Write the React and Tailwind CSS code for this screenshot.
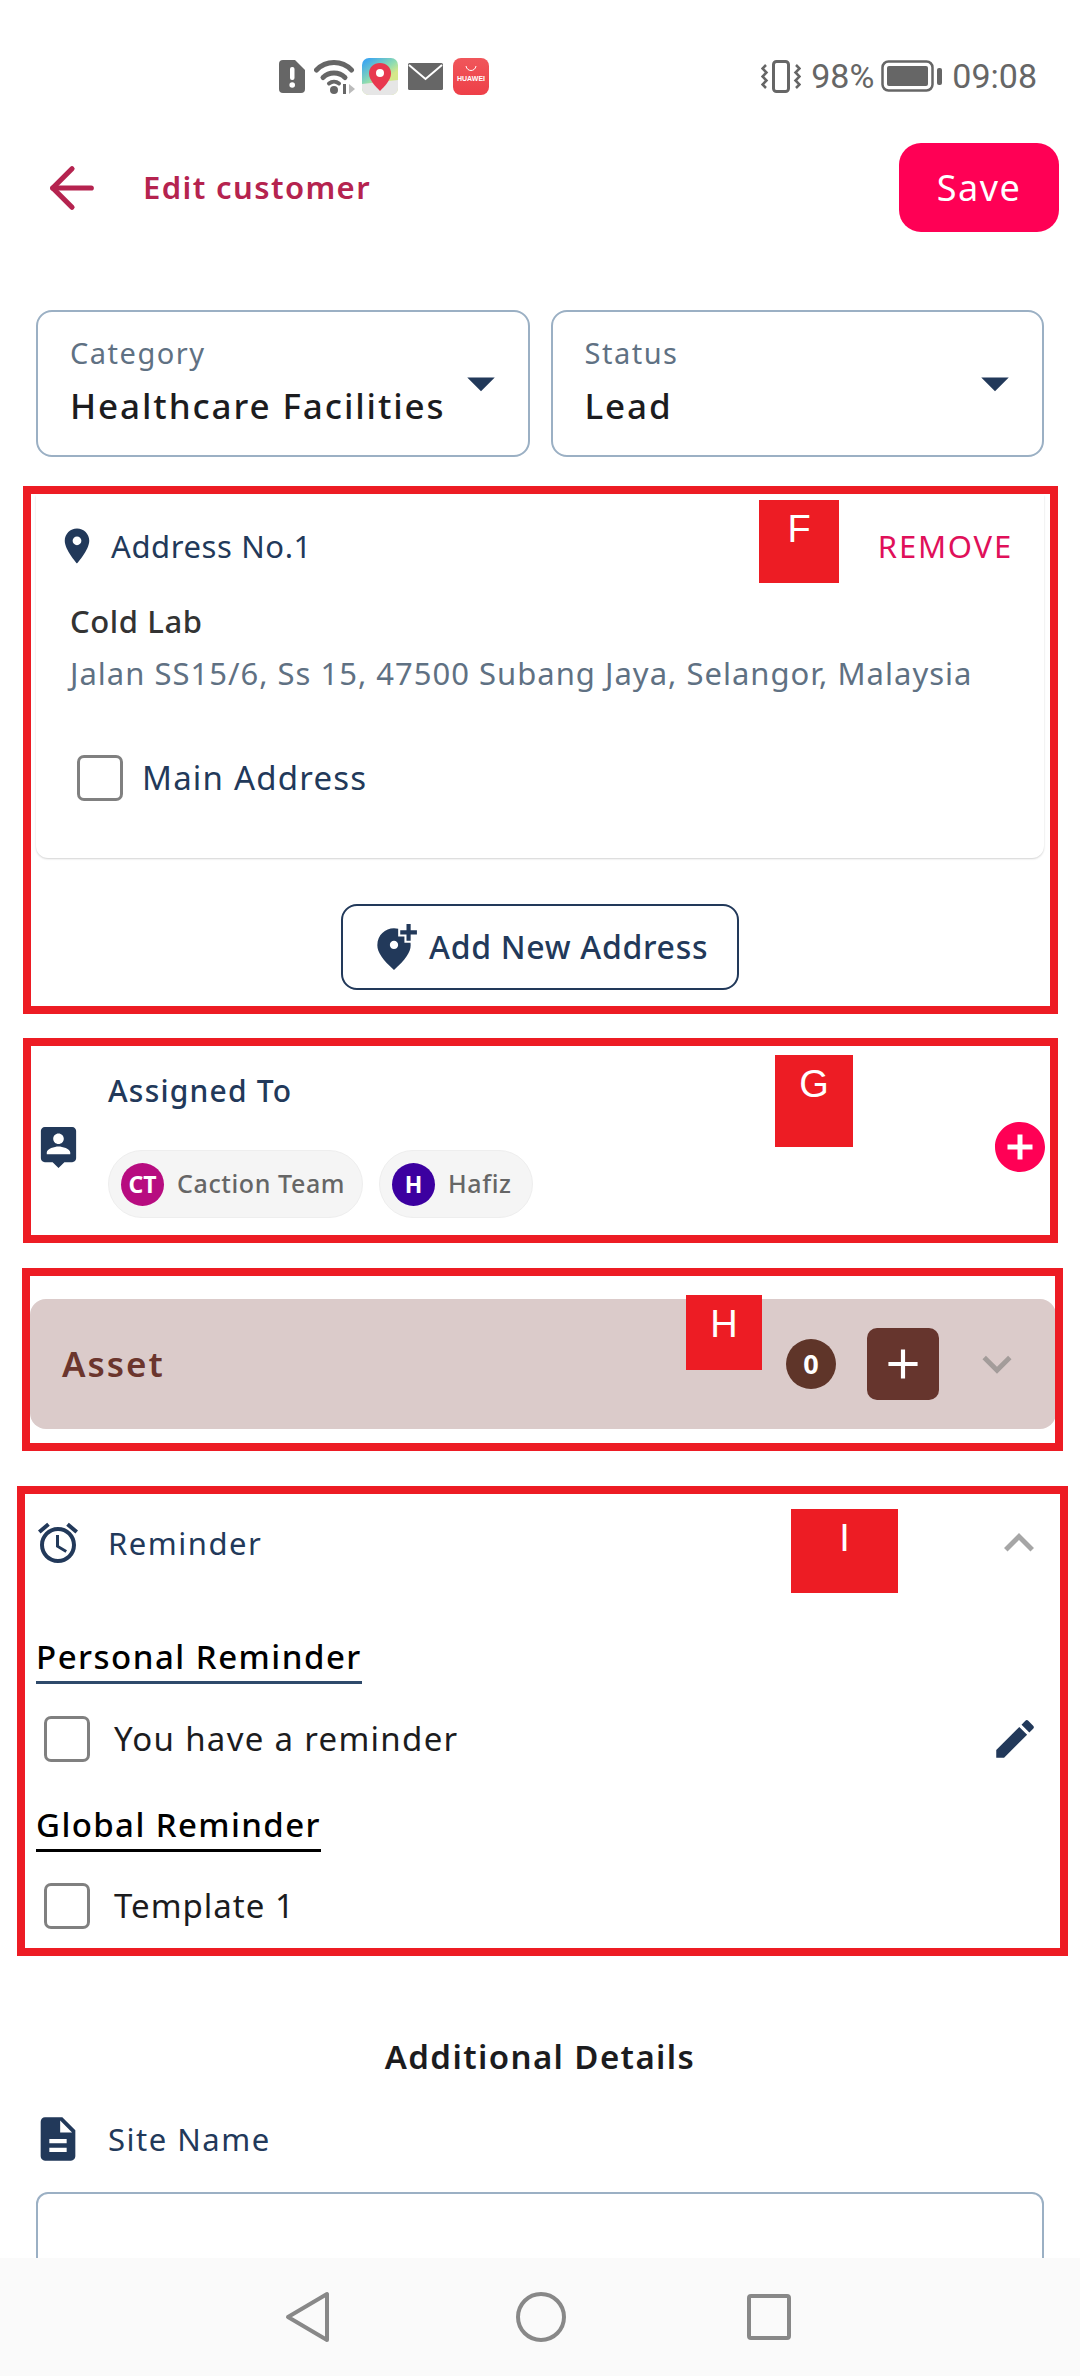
import React from "react";
import { ArrowLeft } from "lucide-react";
import { MdPlace, MdAddLocationAlt, MdAccessAlarm, MdEdit, MdDescription, MdArrowDropDown, MdAdd, MdKeyboardArrowDown, MdKeyboardArrowUp, MdAddCircle } from "react-icons/md";

function StatusBar() {
  return (
    <div className="flex h-[110px] shrink-0 items-start pt-[58px] text-[#666666]">
      <div className="ml-[279px] flex items-center">
        <svg width="26" height="33" viewBox="0 0 26 33"><path d="M4 0h12l10 10v19a4 4 0 0 1-4 4H4a4 4 0 0 1-4-4V4a4 4 0 0 1 4-4z" fill="#666"/><rect x="11" y="7" width="4.5" height="13" rx="2" fill="#fff"/><circle cx="13.2" cy="25" r="2.8" fill="#fff"/></svg>
        <svg className="ml-[9px]" width="42" height="36" viewBox="0 0 42 36" fill="none"><path d="M2.500 11C12 1 28 1 37.500 11" stroke="#666" strokeWidth="5" strokeLinecap="round"/><path d="M9 18.500c6-6 16-6 22 0" stroke="#666" strokeWidth="5" strokeLinecap="round"/><path d="M15 24.500c3-2.500 7-2.500 10 0" stroke="#666" strokeWidth="4" strokeLinecap="round"/><circle cx="20" cy="31" r="4" fill="#666"/><rect x="29" y="25" width="3" height="10" fill="#666"/><path d="M35 25l6 5-6 5z" fill="#bbb"/></svg>
        <svg className="ml-[6px]" width="36" height="37" viewBox="0 0 36 37"><defs><linearGradient id="mapg" x1="0" y1="0" x2="0.7" y2="1"><stop offset="0.1" stopColor="#3fa8ee"/><stop offset="0.5" stopColor="#8fdcb0"/><stop offset="0.7" stopColor="#d5e88a"/></linearGradient></defs><rect width="36" height="37" rx="7" fill="url(#mapg)"/><path d="M0 26l36-4v8a7 7 0 0 1-7 7H7a7 7 0 0 1-7-7z" fill="#e6e6e6"/><path d="M18 5c-6.500 0-11 4.500-11 10.500C7 22 14 29 18 33c4-4 11-11 11-17.500C29 9.500 24.500 5 18 5z" fill="#e8384f"/><circle cx="18" cy="15" r="4" fill="#fff"/></svg>
        <svg className="ml-[10px]" width="35" height="27" viewBox="0 0 35 27"><rect width="35" height="27" rx="1.500" fill="#666"/><path d="M1 2l16.500 14L34 2" fill="none" stroke="#fff" strokeWidth="2"/></svg>
        <div className="ml-[10px] flex h-[37px] w-[36px] flex-col items-center rounded-[8px] bg-gradient-to-b from-[#f0565b] to-[#ee3f48]">
          <svg className="mt-[7px]" width="12" height="7" viewBox="0 0 12 7" fill="none"><path d="M1 1c1 6 9 6 10 0" stroke="#fff" strokeWidth="1"/></svg>
          <span className="mt-[3px] text-[7px] leading-[8px] font-bold text-white [font-family:'Liberation_Sans',sans-serif]">HUAWEI</span>
        </div>
      </div>
      <div className="ml-auto mr-[43px] flex items-center text-[34px] leading-[36px] [font-family:Roboto,sans-serif]">
        <svg width="40" height="33" viewBox="0 0 40 33" fill="none"><rect x="12.500" y="1.500" width="15" height="30" rx="3" stroke="#666" strokeWidth="3"/><path d="M5 5L1.500 8.500l4 4-4 4 4 4-4 4L5 28M35 5l3.500 3.500-4 4 4 4-4 4 4 4L35 28" stroke="#666" strokeWidth="2.500"/></svg>
        <span className="ml-[10px]">98%</span>
        <svg className="ml-[7px]" width="61" height="32" viewBox="0 0 61 32" fill="none"><rect x="1.500" y="1.500" width="50" height="29" rx="6" stroke="#666" strokeWidth="2.500"/><rect x="6" y="6" width="41" height="20" rx="2" fill="#666"/><rect x="56" y="8" width="5" height="17" rx="2" fill="#666"/></svg>
        <span className="ml-[10px]">09:08</span>
      </div>
    </div>
  );
}

function Select({ label, value }) {
  return (
    <div className="relative h-[147px] flex-1 rounded-[16px] border-2 border-[#9bb0c4] pl-[32px]">
      <div className="mt-[23px] text-[29px] leading-[36px] tracking-[1.5px] text-[#5f7183]">{label}</div>
      <div className="mt-[13px] text-[35px] leading-[44px] font-medium tracking-[1.9px] text-[#1c1c1e]">{value}</div>
      <MdArrowDropDown className="absolute right-[14px] top-[38px] text-[#22395a]" size={66} />
    </div>
  );
}

function Check() {
  return <div className="h-[46px] w-[46px] shrink-0 rounded-[7px] border-[3px] border-[#808080]" />;
}

function Chip({ bg, initials, name, className }) {
  return (
    <div className={"flex h-[68px] items-center rounded-full border border-[#eeeeee] bg-[#f5f5f5] pl-[12px] " + className}>
      <div className="flex h-[43px] w-[43px] items-center justify-center rounded-full text-[23px] font-bold text-white" style={{ background: bg }}>{initials}</div>
      <span className="ml-[13px] text-[25px] font-medium tracking-[0.6px] text-[#666666]">{name}</span>
    </div>
  );
}

function Frame({ className }) {
  return <div className={"pointer-events-none absolute border-[8px] border-[#ed1c24] " + className} />;
}

function Tag({ children, className }) {
  return <div className={"absolute flex justify-center bg-[#ed1c24] pt-[6px] text-[38px] leading-[46px] text-white [font-family:'Liberation_Sans',sans-serif] " + className}>{children}</div>;
}

export default function App() {
  return (
    <div className="relative flex h-[2376px] w-[1080px] flex-col overflow-hidden bg-white [font-family:'Noto_Sans',sans-serif]">
      <div className="flex min-h-0 flex-1 flex-col overflow-hidden">
        <StatusBar />

        <div className="mt-[33px] flex h-[89px] shrink-0 items-center pl-[39px] pr-[21px]">
          <ArrowLeft size={66} strokeWidth={1.9} className="text-[#b5234f]" />
          <span className="ml-[38px] text-[31px] font-semibold tracking-[1.4px] text-[#b5234f]">Edit customer</span>
          <button className="ml-auto flex h-[89px] w-[160px] items-center justify-center rounded-[22px] bg-[#ff0055] text-[36px] tracking-[1.5px] text-white">Save</button>
        </div>

        <div className="mt-[78px] flex shrink-0 gap-[21px] px-[36px]">
          <Select label="Category" value="Healthcare Facilities" />
          <Select label="Status" value="Lead" />
        </div>

        {/* address card */}
        <div className="mx-[36px] mt-[38px] h-[363px] shrink-0 rounded-b-[12px] shadow-[0_1px_2px_rgba(0,0,0,0.18)]">
          <div className="flex items-center pl-[22px] pr-[31px] pt-[30px]">
            <MdPlace size={42} className="-ml-[2px] text-[#22395a]" />
            <span className="ml-[13px] text-[31px] leading-[40px] tracking-[0.6px] text-[#22395a]">Address No.1</span>
            <span className="ml-auto text-[31px] leading-[40px] tracking-[1.8px] text-[#e0105a]">REMOVE</span>
          </div>
          <div className="mt-[34px] pl-[34px] text-[31px] leading-[40px] font-medium tracking-[0.6px] text-[#333333]">Cold Lab</div>
          <div className="mt-[12px] pl-[34px] text-[31px] leading-[40px] tracking-[1px] text-[#5f7183]">Jalan SS15/6, Ss 15, 47500 Subang Jaya, Selangor, Malaysia</div>
          <div className="mt-[62px] flex items-center pl-[41px]">
            <Check />
            <span className="ml-[19px] text-[33px] leading-[44px] tracking-[1.2px] text-[#22395a]">Main Address</span>
          </div>
        </div>

        <div className="mt-[46px] flex shrink-0 justify-center">
          <button className="flex h-[86px] w-[398px] items-center rounded-[16px] border-[2.5px] border-[#22395a] pl-[26px] text-[32px] font-medium tracking-[0.7px] text-[#22395a]">
            <MdAddLocationAlt size={50} />
            <span className="ml-[10px]">Add New Address</span>
          </button>
        </div>

        {/* assigned */}
        <div className="mt-[70px] flex h-[172px] shrink-0 items-center pl-[35px] pr-[30px]">
          <svg width="47" height="47" viewBox="0 0 24 24" fill="#22395a" className="mt-[1px] shrink-0">
            <path d="M19 2H5c-1.110 0-2 .9-2 2v14c0 1.100.89 2 2 2h4l3 3 3-3h4c1.100 0 2-.9 2-2V4c0-1.100-.9-2-2-2zm-7 3.300c1.490 0 2.700 1.210 2.700 2.700 0 1.490-1.210 2.700-2.700 2.700-1.490 0-2.700-1.210-2.700-2.700 0-1.490 1.210-2.700 2.700-2.700zM18 16H6v-.9c0-2 4-3.100 6-3.100s6 1.100 6 3.100v.9z" />
          </svg>
          <div className="-mt-[3px] ml-[26px] flex-1">
            <div className="text-[30px] leading-[40px] font-medium tracking-[1.2px] text-[#22395a]">Assigned To</div>
            <div className="mt-[39px] flex gap-[16px]">
              <Chip bg="#b70c80" initials="CT" name="Caction Team" className="w-[255px]" />
              <Chip bg="#3c00a0" initials="H" name="Hafiz" className="w-[154px]" />
            </div>
          </div>
          <MdAddCircle size={60} className="mt-[1px] text-[#ff0055]" />
        </div>

        {/* asset */}
        <div className="ml-[30px] mr-[24px] mt-[67px] flex h-[130px] shrink-0 items-center rounded-[16px] bg-[#dbcbca] pl-[32px] pr-[30px]">
          <span className="text-[35px] font-semibold tracking-[2px] text-[#6b352d]">Asset</span>
          <div className="ml-auto flex h-[50px] w-[50px] items-center justify-center rounded-full bg-[#5f3529] text-[27px] font-bold text-white">0</div>
          <div className="ml-[31px] flex h-[72px] w-[72px] items-center justify-center rounded-[10px] bg-[#66352d]">
            <MdAdd size={50} className="text-white" />
          </div>
          <MdKeyboardArrowDown size={58} className="ml-[29px] text-[#a39c9a]" />
        </div>

        {/* reminder */}
        <div className="mt-[89px] flex h-[50px] shrink-0 items-center pl-[34px] pr-[31px]">
          <MdAccessAlarm size={48} className="text-[#22395a]" />
          <span className="ml-[26px] text-[31px] tracking-[1.5px] text-[#22395a]">Reminder</span>
          <MdKeyboardArrowUp size={60} className="ml-auto text-[#a6a6a6]" />
        </div>
        <div className="mt-[67px] shrink-0 px-[36px]">
          <div className="inline-block border-b-[3px] border-[#2f4a6b] pb-[2px] text-[33px] leading-[44px] font-medium tracking-[1.5px] text-black">Personal Reminder</div>
          <div className="mt-[32px] flex h-[46px] items-center pl-[8px] pr-[4px]">
            <Check />
            <span className="ml-[24px] text-[33px] tracking-[1.3px] text-[#1c1c1e]">You have a reminder</span>
            <MdEdit size={50} className="ml-auto text-[#22395a]" />
          </div>
          <div className="mt-[41px] inline-block border-b-[3px] border-black pb-[2px] text-[33px] leading-[44px] font-medium tracking-[1.4px] text-black">Global Reminder</div>
          <div className="mt-[31px] flex h-[46px] items-center pl-[8px]">
            <Check />
            <span className="ml-[24px] text-[33px] tracking-[1px] text-[#1c1c1e]">Template 1</span>
          </div>
        </div>

        {/* additional */}
        <div className="mt-[106px] shrink-0 text-center text-[33px] leading-[44px] font-semibold tracking-[1.4px] text-[#1c1c1e]">Additional Details</div>
        <div className="mt-[34px] flex shrink-0 items-center pl-[32px]">
          <MdDescription size={52} className="text-[#22395a]" />
          <span className="ml-[24px] text-[31px] tracking-[1.5px] text-[#22395a]">Site Name</span>
        </div>
        <div className="mx-[36px] mt-[27px] h-[120px] shrink-0 rounded-[12px] border-2 border-[#9bb0c4]" />
      </div>

      {/* nav */}
      <div className="flex h-[118px] shrink-0 items-center justify-center gap-[185px] bg-[#fafafa]">
        <svg width="46" height="52" viewBox="0 0 46 52" fill="none"><path d="M42 3v46L3 26z" stroke="#888" strokeWidth="4" strokeLinejoin="round"/></svg>
        <svg width="50" height="50" viewBox="0 0 50 50" fill="none"><circle cx="25" cy="25" r="23" stroke="#888" strokeWidth="4"/></svg>
        <svg className="-ml-[4px] mr-[4px]" width="44" height="46" viewBox="0 0 44 46" fill="none"><rect x="2" y="2" width="40" height="42" rx="2" stroke="#888" strokeWidth="4"/></svg>
      </div>

      {/* annotation overlays */}
      <Frame className="left-[23px] top-[486px] h-[528px] w-[1035px]" />
      <Frame className="left-[23px] top-[1038px] h-[205px] w-[1035px]" />
      <Frame className="left-[22px] top-[1268px] h-[183px] w-[1041px]" />
      <Frame className="left-[17px] top-[1486px] h-[470px] w-[1051px]" />
      <Tag className="left-[759px] top-[500px] h-[83px] w-[80px]">F</Tag>
      <Tag className="left-[775px] top-[1055px] h-[92px] w-[78px]">G</Tag>
      <Tag className="left-[686px] top-[1295px] h-[75px] w-[76px]">H</Tag>
      <Tag className="left-[791px] top-[1509px] h-[84px] w-[107px]">I</Tag>
    </div>
  );
}
